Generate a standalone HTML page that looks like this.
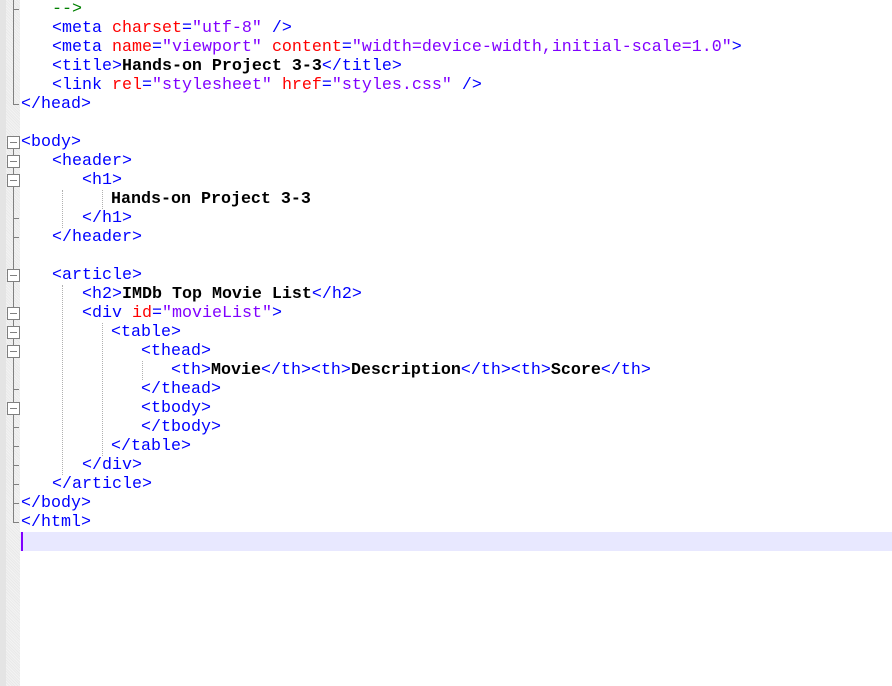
<!DOCTYPE html>
<html><head><meta charset="utf-8"><style>
html,body{margin:0;padding:0;background:#fff;width:892px;height:686px;overflow:hidden;position:relative}
.gut1{position:absolute;left:0;top:0;width:6px;height:686px;background:#e4e4e4}
.gut2{position:absolute;left:6px;top:0;width:14px;height:686px;background-color:#f3f3f3;background-image:repeating-linear-gradient(45deg,#e9e9e9 0 1px,transparent 1px 2px)}
.cur{position:absolute;left:20px;top:532px;width:872px;height:19px;background:#e8e8ff}
.caret{position:absolute;left:21px;top:532px;width:2px;height:19px;background:#8000ff}
.l{position:absolute;height:19px;line-height:19px;font-family:"Liberation Mono","Courier New",monospace;font-size:16.67px;white-space:pre;color:#000;font-weight:bold}
.t{color:#0000ff;font-weight:normal}.a{color:#ff0000;font-weight:normal}.v{color:#8000ff;font-weight:normal}.c{color:#008000;font-weight:normal}
.vl{position:absolute;left:13px;width:1px;background:#808080}
.tk{position:absolute;left:13px;width:6px;height:1px;background:#808080}
.bx{position:absolute;left:7px;width:13px;height:13px;border:1px solid #808080;background:#fff;box-sizing:border-box}
.bx:after{content:"";position:absolute;left:2px;top:5px;width:7px;height:1px;background:#808080}
.g{position:absolute;width:0;border-left:1px dotted #b0b0b0}
</style></head><body>
<div class="gut1"></div><div class="gut2"></div>
<div class="cur"></div><div class="caret"></div>
<div class="vl" style="top:0;height:105px"></div>
<div class="tk" style="top:9px"></div>
<div class="tk" style="top:104px"></div>
<div class="vl" style="top:142px;height:381px"></div>
<div class="tk" style="top:522px"></div>
<div class="tk" style="top:218px"></div>
<div class="tk" style="top:237px"></div>
<div class="tk" style="top:389px"></div>
<div class="tk" style="top:427px"></div>
<div class="tk" style="top:446px"></div>
<div class="tk" style="top:465px"></div>
<div class="tk" style="top:484px"></div>
<div class="tk" style="top:503px"></div>
<div class="bx" style="top:136px"></div>
<div class="bx" style="top:155px"></div>
<div class="bx" style="top:174px"></div>
<div class="bx" style="top:269px"></div>
<div class="bx" style="top:307px"></div>
<div class="bx" style="top:326px"></div>
<div class="bx" style="top:345px"></div>
<div class="bx" style="top:402px"></div>
<div class="g" style="left:62px;top:190px;height:38px"></div>
<div class="g" style="left:102px;top:190px;height:19px"></div>
<div class="g" style="left:62px;top:285px;height:190px"></div>
<div class="g" style="left:102px;top:323px;height:133px"></div>
<div class="g" style="left:142px;top:361px;height:19px"></div>
<div class="l" style="top:0;left:52px"><span class="c">--&gt;</span></div>
<div class="l" style="top:19px;left:52px"><span class="t">&lt;meta </span><span class="a">charset</span><span class="t">=</span><span class="v">"utf-8"</span><span class="t"> /&gt;</span></div>
<div class="l" style="top:38px;left:52px"><span class="t">&lt;meta </span><span class="a">name</span><span class="t">=</span><span class="v">"viewport"</span><span class="t"> </span><span class="a">content</span><span class="t">=</span><span class="v">"width=device-width,initial-scale=1.0"</span><span class="t">&gt;</span></div>
<div class="l" style="top:57px;left:52px"><span class="t">&lt;title&gt;</span>Hands-on Project 3-3<span class="t">&lt;/title&gt;</span></div>
<div class="l" style="top:76px;left:52px"><span class="t">&lt;link </span><span class="a">rel</span><span class="t">=</span><span class="v">"stylesheet"</span><span class="t"> </span><span class="a">href</span><span class="t">=</span><span class="v">"styles.css"</span><span class="t"> /&gt;</span></div>
<div class="l" style="top:95px;left:21px"><span class="t">&lt;/head&gt;</span></div>
<div class="l" style="top:133px;left:21px"><span class="t">&lt;body&gt;</span></div>
<div class="l" style="top:152px;left:52px"><span class="t">&lt;header&gt;</span></div>
<div class="l" style="top:171px;left:82px"><span class="t">&lt;h1&gt;</span></div>
<div class="l" style="top:190px;left:111px">Hands-on Project 3-3</div>
<div class="l" style="top:209px;left:82px"><span class="t">&lt;/h1&gt;</span></div>
<div class="l" style="top:228px;left:52px"><span class="t">&lt;/header&gt;</span></div>
<div class="l" style="top:266px;left:52px"><span class="t">&lt;article&gt;</span></div>
<div class="l" style="top:285px;left:82px"><span class="t">&lt;h2&gt;</span>IMDb Top Movie List<span class="t">&lt;/h2&gt;</span></div>
<div class="l" style="top:304px;left:82px"><span class="t">&lt;div </span><span class="a">id</span><span class="t">=</span><span class="v">"movieList"</span><span class="t">&gt;</span></div>
<div class="l" style="top:323px;left:111px"><span class="t">&lt;table&gt;</span></div>
<div class="l" style="top:342px;left:141px"><span class="t">&lt;thead&gt;</span></div>
<div class="l" style="top:361px;left:171px"><span class="t">&lt;th&gt;</span>Movie<span class="t">&lt;/th&gt;&lt;th&gt;</span>Description<span class="t">&lt;/th&gt;&lt;th&gt;</span>Score<span class="t">&lt;/th&gt;</span></div>
<div class="l" style="top:380px;left:141px"><span class="t">&lt;/thead&gt;</span></div>
<div class="l" style="top:399px;left:141px"><span class="t">&lt;tbody&gt;</span></div>
<div class="l" style="top:418px;left:141px"><span class="t">&lt;/tbody&gt;</span></div>
<div class="l" style="top:437px;left:111px"><span class="t">&lt;/table&gt;</span></div>
<div class="l" style="top:456px;left:82px"><span class="t">&lt;/div&gt;</span></div>
<div class="l" style="top:475px;left:52px"><span class="t">&lt;/article&gt;</span></div>
<div class="l" style="top:494px;left:21px"><span class="t">&lt;/body&gt;</span></div>
<div class="l" style="top:513px;left:21px"><span class="t">&lt;/html&gt;</span></div>
</body></html>
